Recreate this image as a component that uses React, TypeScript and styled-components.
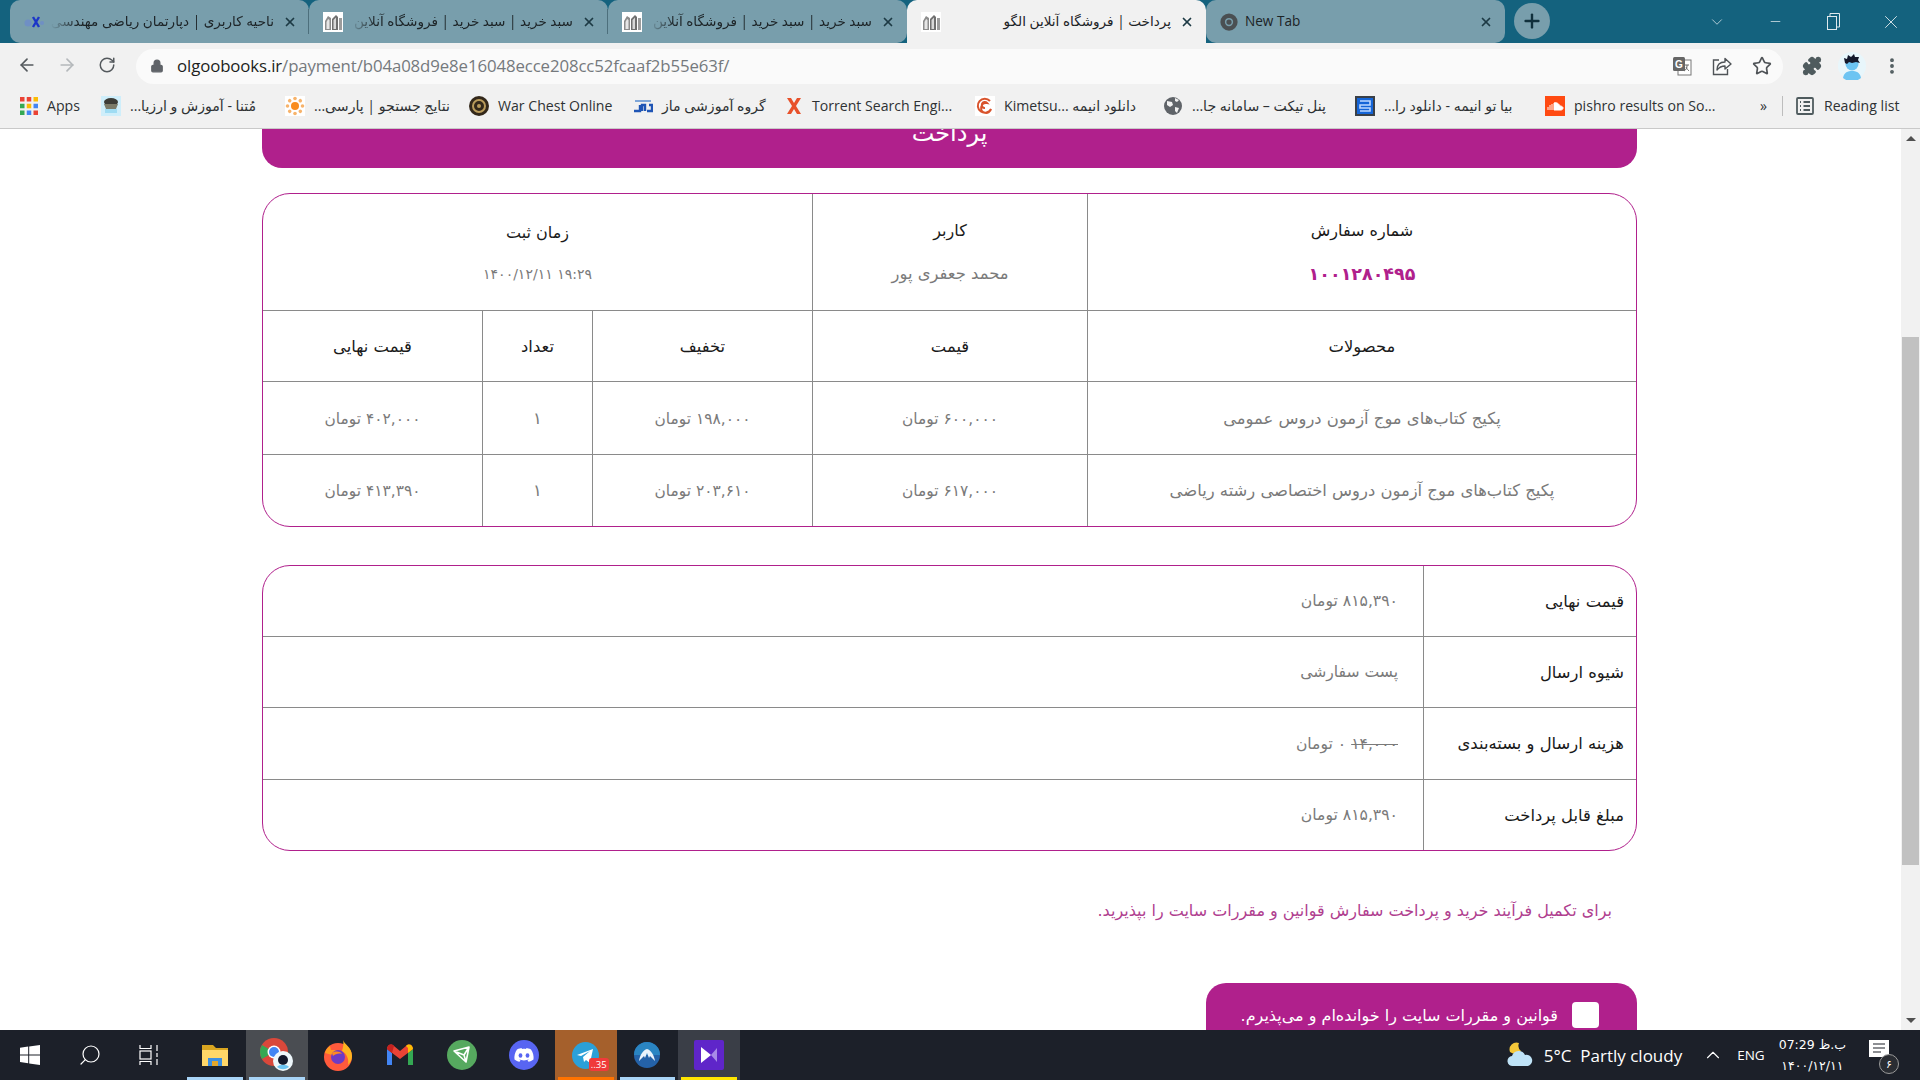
import React from "react";
import styled, { createGlobalStyle } from "styled-components";
import {
  ArrowLeft,
  ArrowRight,
  RotateCw,
  Lock,
  Star,
  MoreVertical,
  ChevronDown,
  ChevronUp,
  Minus,
  X,
  Plus,
  Puzzle,
  Search,
} from "lucide-react";

const Global = createGlobalStyle`
  html, body { margin: 0; padding: 0; background: #fff; overflow: hidden; }
  * { box-sizing: border-box; }
  body { font-family: "Open Sans", "DejaVu Sans", sans-serif; }
`;

const MAGENTA = "#b0208c";
const PERSIAN = '"DejaVu Sans", "Noto Sans", sans-serif';

const Shell = styled.div`
  display: flex;
  flex-direction: column;
  width: 1920px;
  height: 1080px;
  overflow: hidden;
`;

/* ---------- tab strip ---------- */

const TabStrip = styled.div`
  display: flex;
  align-items: stretch;
  flex: 0 0 43px;
  padding-left: 10px;
  background: #14627e;
`;

const Tab = styled.div<{ $active?: boolean; $bl?: boolean; $br?: boolean; $divider?: boolean }>`
  position: relative;
  display: flex;
  align-items: center;
  flex: 0 0 299px;
  min-width: 0;
  padding: 0 12px 0 14px;
  background: ${(p) => (p.$active ? "#f1f1f1" : "#789eac")};
  border-radius: 10px 10px ${(p) => (p.$br ? "10px" : "0")} ${(p) => (p.$bl ? "10px" : "0")};
  color: #1c2326;
  ${(p) =>
    p.$divider &&
    `&::after {
      content: "";
      position: absolute;
      right: 0;
      top: 9px;
      bottom: 9px;
      width: 1px;
      background: #4d6f7c;
    }`}
`;

const TabTitle = styled.div<{ $rtl?: boolean; $fade?: boolean }>`
  flex: 1;
  min-width: 0;
  margin: 0 9px 2px 7px;
  overflow: hidden;
  white-space: nowrap;
  font-family: "Open Sans", ${PERSIAN};
  font-size: 13.6px;
  direction: ${(p) => (p.$rtl ? "rtl" : "ltr")};
  ${(p) =>
    p.$fade &&
    `-webkit-mask-image: linear-gradient(to right, transparent 0, #000 26px);
     mask-image: linear-gradient(to right, transparent 0, #000 26px);`}
`;

const TabClose = styled(X)`
  flex: none;
  width: 14px;
  height: 14px;
  color: #1d3a44;
  stroke-width: 3;
`;

const NewTab = styled.div`
  display: flex;
  align-items: center;
  justify-content: center;
  width: 36px;
  height: 36px;
  margin: 3px 0 0 9px;
  border-radius: 50%;
  background: #789eac;
  color: #10303c;
`;

const WindowButtons = styled.div`
  display: flex;
  align-items: center;
  margin-left: auto;
  color: #dfe9ed;
`;

const WindowButton = styled.div<{ $w: number }>`
  display: flex;
  align-items: center;
  justify-content: center;
  width: ${(p) => p.$w}px;
  height: 43px;
`;

/* ---------- toolbar ---------- */

const Toolbar = styled.div`
  display: flex;
  align-items: center;
  flex: 0 0 43px;
  padding-left: 7px;
  background: #f1f1f1;
  color: #5f6368;
`;

const NavButton = styled.div<{ $dim?: boolean }>`
  display: flex;
  justify-content: center;
  width: 40px;
  color: ${(p) => (p.$dim ? "#b4b8bb" : "#54595d")};
`;

const Omnibox = styled.div`
  display: flex;
  align-items: center;
  flex: 0 0 1647px;
  height: 35px;
  margin: 3px 0 0 9px;
  padding: 0 0 0 14px;
  border-radius: 18px;
  background: #fafafa;
`;

const UrlText = styled.div`
  margin: 0 0 2px 13px;
  font-size: 16.8px;
  color: #75797d;
  letter-spacing: -0.1px;
  b {
    font-weight: 400;
    color: #1c1e20;
  }
`;

const OmniIcons = styled.div`
  display: flex;
  align-items: center;
  gap: 20px;
  margin-left: auto;
  padding-right: 11px;
  color: #4f5357;
`;

const ToolIcons = styled.div`
  display: flex;
  align-items: center;
  gap: 16px;
  margin-left: 19px;
  margin-top: 3px;
`;

/* ---------- bookmarks ---------- */

const BookmarkBar = styled.div`
  display: flex;
  align-items: center;
  flex: 0 0 43px;
  padding: 0 0 3px 20px;
  background: #f1f1f1;
  border-bottom: 1px solid #c9c9c9;
`;

const Bookmark = styled.div<{ $w: number }>`
  display: flex;
  align-items: center;
  gap: 9px;
  flex: 0 0 ${(p) => p.$w}px;
  color: #2e3134;
  white-space: nowrap;
`;

const BookmarkLabel = styled.span`
  font-family: "Open Sans", ${PERSIAN};
  font-size: 14.1px;
`;

const Separator = styled.div`
  width: 1px;
  height: 20px;
  margin: 0 12px 0 10px;
  background: #bdbdbd;
`;

/* ---------- page ---------- */

const Viewport = styled.div`
  display: flex;
  flex: 1;
  min-height: 0;
`;

const PageScroll = styled.div`
  flex: 1;
  min-width: 0;
  overflow: hidden;
  background: #fff;
`;

const Page = styled.main`
  display: flex;
  flex-direction: column;
  align-items: stretch;
  width: 1375px;
  margin: -31px 0 0 262px;
  direction: rtl;
  font-family: ${PERSIAN};
`;

const PageHeader = styled.h1`
  display: flex;
  align-items: center;
  justify-content: center;
  height: 70px;
  margin: 0 0 25px;
  border-radius: 0 0 20px 20px;
  background: ${MAGENTA};
  color: #fff;
  font-size: 24px;
  font-weight: 400;
`;

const Table = styled.table`
  width: 1375px;
  border-collapse: separate;
  border-spacing: 0;
  table-layout: fixed;
  border: 1px solid ${MAGENTA};
  border-radius: 28px;
  margin-bottom: 38px;
`;

const Row = styled.tr<{ $h: number }>`
  height: ${(p) => p.$h}px;
`;

const Cell = styled.td<{ $start?: boolean; $heading?: boolean }>`
  padding: 0 12px;
  text-align: ${(p) => (p.$start ? "right" : "center")};
  font-size: 16.4px;
  font-weight: 400;
  color: ${(p) => (p.$heading ? "#1a1a1a" : "#7a7a7a")};
  border-left: 1px solid #8a8a8a;
  border-bottom: 1px solid #8a8a8a;
  &:last-child {
    border-left: none;
  }
  tr:last-child > & {
    border-bottom: none;
  }
`;

const Amount = styled.span`
  font-size: 15.4px;
`;

const SummaryValue = styled(Cell)`
  padding-right: 25px;
  text-align: right;
  font-size: 15.6px;
`;

const OrderCell = styled.div`
  display: flex;
  flex-direction: column;
  align-items: center;
  gap: 24px;
`;

const OrderLabel = styled.span`
  font-size: 16px;
  color: #1a1a1a;
`;

const OrderValue = styled.span<{ $accent?: boolean; $size?: number }>`
  font-size: ${(p) => p.$size || (p.$accent ? 17.5 : 16.4)}px;
  font-weight: ${(p) => (p.$accent ? 700 : 400)};
  color: ${(p) => (p.$accent ? MAGENTA : "#7a7a7a")};
`;

const Notice = styled.p`
  margin: 12px 25px 0 0;
  height: 82px;
  font-size: 16px;
  color: #b0408f;
`;

const AcceptBar = styled.label`
  display: flex;
  align-items: center;
  gap: 14px;
  align-self: flex-start;
  width: 431px;
  height: 72px;
  padding: 0 38px 8px 0;
  border-radius: 20px 20px 0 0;
  background: ${MAGENTA};
  color: #fff;
  font-size: 16px;
  white-space: nowrap;
`;

const AcceptBox = styled.span`
  flex: none;
  width: 27px;
  height: 26px;
  border-radius: 4px;
  background: #fff;
`;

const Scrollbar = styled.div`
  display: flex;
  flex-direction: column;
  justify-content: space-between;
  flex: 0 0 19px;
  position: relative;
  background: #f1f1f1;
`;

const ScrollArrow = styled.div<{ $down?: boolean }>`
  width: 0;
  height: 0;
  margin: 7px auto;
  border-left: 5px solid transparent;
  border-right: 5px solid transparent;
  ${(p) => (p.$down ? "border-top: 5px solid #505050;" : "border-bottom: 5px solid #505050;")}
`;

const ScrollThumb = styled.div`
  position: absolute;
  top: 208px;
  left: 1px;
  right: 1px;
  height: 528px;
  background: #c1c1c1;
`;

/* ---------- taskbar ---------- */

const Taskbar = styled.footer`
  display: flex;
  align-items: stretch;
  flex: 0 0 50px;
  background: #1c2029;
  color: #fff;
`;

const SystemSlot = styled.div`
  display: flex;
  align-items: center;
  justify-content: center;
  width: 60px;
`;

const AppSlots = styled.div`
  display: flex;
  margin-left: 4px;
`;

const AppSlot = styled.div<{ $bg?: string; $line?: string }>`
  position: relative;
  display: flex;
  align-items: center;
  justify-content: center;
  width: 61.8px;
  background: ${(p) => p.$bg || "transparent"};
  ${(p) =>
    p.$line &&
    `&::after {
      content: "";
      position: absolute;
      left: 3px;
      right: 3px;
      bottom: 0;
      height: 3px;
      background: ${p.$line};
    }`}
`;

const Badge = styled.span`
  position: absolute;
  left: 34px;
  top: 28px;
  padding: 0 2px;
  border-radius: 3px;
  background: #f03a3a;
  font-size: 9.5px;
  line-height: 13px;
  color: #fff;
`;

const Tray = styled.div`
  display: flex;
  align-items: center;
  margin-left: auto;
  font-family: "Open Sans", sans-serif;
`;

const WeatherText = styled.span`
  margin-left: 10px;
  font-size: 17px;
  white-space: nowrap;
`;

const EngText = styled.span`
  margin-left: 13px;
  font-size: 13.5px;
`;

const Clock = styled.div`
  display: flex;
  flex-direction: column;
  align-items: center;
  gap: 6px;
  margin-left: 14px;
  font-family: ${PERSIAN};
  font-size: 12.5px;
  line-height: 15px;
  direction: rtl;
`;

const NotifyWrap = styled.div`
  position: relative;
  width: 30px;
  height: 30px;
  margin: 0 21px 0 23px;
`;

const NotifyBadge = styled.span`
  position: absolute;
  left: 10px;
  top: 14px;
  display: flex;
  align-items: center;
  justify-content: center;
  width: 20px;
  height: 20px;
  border: 1px solid #9a9a9a;
  border-radius: 50%;
  background: #2a2d33;
  font-family: ${PERSIAN};
  font-size: 11px;
`;

/* ---------- drawn icons ---------- */

const StoreFavicon = () => (
  <svg width="20" height="20" viewBox="0 0 20 20">
    <rect width="20" height="20" fill="#fff" />
    <path d="M2 18V9l3-5 3 2v12z" fill="#8c8c8c" />
    <path d="M3.500 17V10l1.600-3 1.400 1v9z" fill="#e6e6e6" />
    <path d="M9 18V7l4-4 2 2v13z" fill="#6f6f6f" />
    <path d="M10.500 17V8l2.500-2.500v11.500z" fill="#d8d8d8" />
    <path d="M16 18V6h3v12z" fill="#9c9c9c" />
  </svg>
);

const DeptFavicon = () => (
  <svg width="20" height="16" viewBox="0 0 20 16">
    <circle cx="4" cy="9" r="3.500" fill="#6f8fc4" />
    <path d="M9 3l6 10M15 3 9 13" stroke="#1c36c8" strokeWidth="2.400" />
    <circle cx="18" cy="9" r="2" fill="#6f8fc4" />
  </svg>
);

const ChromeLogo = ({ size = 16 }: { size?: number }) => (
  <svg width={size} height={size} viewBox="0 0 48 48">
    <circle cx="24" cy="24" r="23" fill="#4a4f52" />
    <circle cx="24" cy="24" r="11" fill="#789eac" />
    <circle cx="24" cy="24" r="7" fill="#4a4f52" />
  </svg>
);

const Avatar = ({ size = 28 }: { size?: number }) => (
  <svg width={size} height={size} viewBox="0 0 28 28">
    <circle cx="14" cy="14" r="14" fill="#e8f6fb" />
    <circle cx="14" cy="12" r="6.500" fill="#6cc4f2" />
    <path d="M5 26c1-6 5-7 9-7s8 1 9 7a14 14 0 0 1-18 0z" fill="#6cc4f2" />
    <path d="M7 11 6 6l3 1 1-4 3 2 3-3 1 3 4 0-1 3 2 3-4-1-4 1-3-1-2 2z" fill="#14182b" />
  </svg>
);

const TranslateIcon = () => (
  <svg width="20" height="20" viewBox="0 0 20 20">
    <rect x="6" y="4" width="13" height="15" fill="#fff" stroke="#777" />
    <rect x="1" y="1" width="12" height="14" rx="1.500" fill="#666" />
    <text x="7" y="12" textAnchor="middle" fontSize="10" fontWeight="700" fill="#fff" fontFamily="Liberation Sans">
      G
    </text>
    <path d="M13 9h4M15 9v1c0 2-1 4-3 5M14 11c1 2 2 3 3 4" fill="none" stroke="#666" />
  </svg>
);

const ShareIcon = () => (
  <svg width="20" height="20" viewBox="0 0 20 20" fill="none" stroke="currentColor" strokeWidth="1.400">
    <path d="M7 4H1.500v14.500h14V13" />
    <path d="M5 14c0-5 3-8 8-8V2.500l6 5.500-6 5V10c-4 0-6 1.500-8 4z" strokeLinejoin="round" />
  </svg>
);

const AppsIcon = () => (
  <svg width="18" height="18" viewBox="0 0 16 16">
    {[0, 1, 2].map((r) =>
      [0, 1, 2].map((c) => (
        <rect
          key={`${r}-${c}`}
          x={c * 6}
          y={r * 6}
          width="4"
          height="4"
          fill={[["#ea4335", "#ea4335", "#fbbc05"], ["#34a853", "#fbbc05", "#4285f4"], ["#34a853", "#4285f4", "#ea4335"]][r][c]}
        />
      ))
    )}
  </svg>
);

const MotanaIcon = () => (
  <svg width="20" height="20" viewBox="0 0 20 20">
    <rect width="20" height="20" fill="#cfeefa" />
    <ellipse cx="10" cy="6" rx="7" ry="4" fill="#3c3c36" />
    <path d="M3 8h14l-2 5H5z" fill="#7a7a68" />
    <path d="M4 13h12v4H4z" fill="#9fdcf3" />
  </svg>
);

const ParsiIcon = () => (
  <svg width="20" height="20" viewBox="0 0 20 20">
    <rect width="20" height="20" fill="#fff" />
    <circle cx="10" cy="10" r="4" fill="#f98c1f" />
    {[0, 45, 90, 135, 180, 225, 270, 315].map((a) => (
      <circle key={a} cx="10" cy="2.500" r="1.800" fill="#f7b36b" transform={`rotate(${a} 10 10)`} />
    ))}
  </svg>
);

const WarChestIcon = () => (
  <svg width="20" height="20" viewBox="0 0 20 20">
    <circle cx="10" cy="10" r="10" fill="#33281a" />
    <circle cx="10" cy="10" r="6" fill="none" stroke="#b99b5b" strokeWidth="2" />
    <circle cx="10" cy="10" r="2" fill="#b99b5b" />
  </svg>
);

const MazIcon = () => (
  <svg width="20" height="20" viewBox="0 0 20 20">
    <path d="M2 5h16" stroke="#7fa6d8" strokeWidth="2" />
    <path d="M1 15h6V9M9 15V9h3v6M14 15h5V9h-3" fill="none" stroke="#1f55b5" strokeWidth="2.400" />
  </svg>
);

const TorrentIcon = () => (
  <svg width="18" height="18" viewBox="0 0 18 18">
    <path d="M2 1h4l3 5 3-5h4l-5 8 5 8h-4l-3-5-3 5H2l5-8z" fill="#e8512a" />
  </svg>
);

const KimetsuIcon = () => (
  <svg width="20" height="20" viewBox="0 0 20 20">
    <rect width="20" height="20" fill="#fff" />
    <path d="M15 5a7 7 0 1 0 1 8 5 5 0 1 1-4-6 3 3 0 1 0-2 5" fill="none" stroke="#d9532c" strokeWidth="2" />
  </svg>
);

const GlobeIcon = () => (
  <svg width="20" height="20" viewBox="0 0 20 20">
    <circle cx="10" cy="10" r="9" fill="#5f6368" />
    <path d="M4 5l5 1 1 3-3 2-3-2zM12 11l4 1-2 5-2-2zM12 2l4 2-2 2-2-1z" fill="#f1f1f1" />
  </svg>
);

const AnaIcon = () => (
  <svg width="20" height="20" viewBox="0 0 20 20">
    <rect width="20" height="20" fill="#3a4048" />
    <rect x="2" y="2" width="16" height="16" fill="#1565d8" />
    <path d="M5 5h10v4H5v3h10v3H5" fill="none" stroke="#bcd7ff" strokeWidth="1.600" />
  </svg>
);

const SoundcloudIcon = () => (
  <svg width="20" height="20" viewBox="0 0 20 20">
    <rect width="20" height="20" fill="#ff4a12" />
    <path d="M3 14v-3M5 14V9M7 14V8M9 14V7c3-1 5 1 6 3 2 0 3 1 3 2s-1 2-2 2z" stroke="#fff" fill="#fff" strokeWidth="1" />
  </svg>
);

const ReadingListIcon = () => (
  <svg width="20" height="20" viewBox="0 0 20 20" fill="none" stroke="#4f5b5e" strokeWidth="1.800">
    <rect x="2" y="2" width="16" height="16" rx="1" />
    <path d="M5 6h1M8.500 6H15M5 10h1M8.500 10H15M5 14h1M8.500 14H15" />
  </svg>
);

const WindowsLogo = () => (
  <svg width="20" height="20" viewBox="0 0 20 20" fill="#fff">
    <path d="M0 2.800 8.200 1.600v7.800H0zM9.200 1.500 20 0v9.400H9.200zM0 10.400h8.200v7.900L0 17.100zM9.200 10.400H20V20L9.200 18.500z" />
  </svg>
);

const TaskViewIcon = () => (
  <svg width="22" height="20" viewBox="0 0 22 20" fill="none" stroke="#fff" strokeWidth="1.200">
    <path d="M1 0v3.500h11V0M1 20v-3.500h11V20" />
    <rect x="1" y="6" width="11" height="8" />
    <path d="M18 0v6M18 8v4M18 14v6" />
  </svg>
);

const ExplorerIcon = () => (
  <svg width="28" height="24" viewBox="0 0 28 24">
    <path d="M1 2h11l3 3h12v18H1z" fill="#d9a520" />
    <path d="M1 7h26v16H1z" fill="#ffd768" />
    <path d="M7 23v-8h14v8h-4v-5h-6v5z" fill="#3d8fe0" />
    <path d="M11 18h6v5h-6z" fill="#e4a72b" />
  </svg>
);

const ChromeWithAvatar = () => (
  <svg width="36" height="36" viewBox="0 0 36 36">
    <circle cx="15" cy="15" r="14" fill="#d9483b" />
    <path d="M15 15 3 22a14 14 0 0 1 0-14z" fill="#34a853" />
    <path d="M15 15h14a14 14 0 0 1-14 14z" fill="#f4c20d" />
    <circle cx="15" cy="15" r="6.500" fill="#fff" />
    <circle cx="15" cy="15" r="5" fill="#4285f4" />
    <circle cx="24" cy="24" r="10" fill="#eef7fb" />
    <circle cx="24" cy="23" r="5" fill="#14182b" />
    <path d="M18 30c2-3 10-3 12 0a10 10 0 0 1-12 0z" fill="#6cc4f2" />
  </svg>
);

const FirefoxIcon = () => (
  <svg width="30" height="32" viewBox="0 0 30 32">
    <circle cx="15" cy="18" r="14" fill="#ff5a3c" />
    <path d="M20 1c1 4 9 7 9 16 0 4-2 7-4 9 1-6-1-11-6-14 1-4 2-7 1-11z" fill="#ffb51f" />
    <path d="M2 14c1-4 3-6 5-7l1 4 5 0 2 3-6 2z" fill="#ff9a1f" />
    <circle cx="15" cy="18" r="7" fill="#6e3bc4" />
    <path d="M9 14c3-2 8-2 10 1-3-1-7 0-9 2z" fill="#ff8a1f" />
  </svg>
);

const GmailIcon = () => (
  <svg width="28" height="24" viewBox="0 0 28 24">
    <path d="M1 6v16h5V10z" fill="#4285f4" />
    <path d="M22 10v12h5V6z" fill="#34a853" />
    <path d="M1 6c0-4 4-6 7-3l6 5 6-5c3-3 7-1 7 3l-13 10z" fill="#ea4335" />
    <path d="M20 3c3-3 7-1 7 3l-5 4V5z" fill="#fbbc05" />
    <path d="M1 6c0-4 4-6 7-3l-2 7z" fill="#c5221f" />
  </svg>
);

const GreenIcon = () => (
  <svg width="30" height="30" viewBox="0 0 30 30">
    <circle cx="15" cy="15" r="15" fill="#56a95f" />
    <path d="M7 11 22 7l-3 15z M7 11l10 4 2 7M22 7l-5 8" fill="none" stroke="#fff" strokeWidth="1.600" strokeLinejoin="round" />
  </svg>
);

const DiscordIcon = () => (
  <svg width="30" height="30" viewBox="0 0 30 30">
    <circle cx="15" cy="15" r="15" fill="#5865f2" />
    <path d="M8 9.500c2-1 3.500-1.400 4.500-1.500l.5 1c1.300-.2 2.700-.2 4 0l.5-1c1 .1 2.500.5 4.500 1.500 2 3 3 6.500 2.500 10-1.500 1.200-3.300 2-5 2.300l-1-1.600 1.800-.9c-3.500 1.500-7.100 1.500-10.600 0l1.800.9-1 1.600c-1.700-.3-3.500-1.100-5-2.300-.5-3.500.5-7 2.500-10z" fill="#fff" />
    <ellipse cx="11.500" cy="15.500" rx="1.900" ry="2.200" fill="#5865f2" />
    <ellipse cx="18.500" cy="15.500" rx="1.900" ry="2.200" fill="#5865f2" />
  </svg>
);

const TelegramIcon = () => (
  <svg width="27" height="27" viewBox="0 0 27 27">
    <circle cx="13.500" cy="13.500" r="13.500" fill="#2ba0d8" />
    <path d="M5 13 21 7l-3 14-4-3-2 2-1-5 7-6-9 5z" fill="#fff" />
  </svg>
);

const NordIcon = () => (
  <svg width="26" height="26" viewBox="0 0 26 26">
    <circle cx="13" cy="13" r="13" fill="#2462a8" />
    <path d="M13 0a13 13 0 0 1 13 13H0A13 13 0 0 1 13 0z" fill="#2a85c2" />
    <path d="M5 19c1-6 4-11 8-12 4 1 7 6 8 12l-5-5-1 2-2-5-2 5-1-2z" fill="#eaf3fb" />
  </svg>
);

const VsIcon = () => (
  <svg width="30" height="30" viewBox="0 0 30 30">
    <rect width="30" height="30" rx="2" fill="#5f25c9" />
    <path d="M7 7v16l10-8z" fill="#fff" />
    <path d="M17 15l6-7v14z" fill="#a88be8" />
  </svg>
);

const WeatherIcon = () => (
  <svg width="28" height="26" viewBox="0 0 28 26">
    <path d="M13 1a7 7 0 0 0-9 9 8 8 0 0 0 11-1 7 7 0 0 1-2-8z" fill="#f5c83a" />
    <path d="M7 24a5 5 0 0 1-1-10 7 7 0 0 1 13-1 5.500 5.500 0 0 1 3 11z" fill="#bfe3f7" />
  </svg>
);

const NotifyIcon = () => (
  <svg width="20" height="18" viewBox="0 0 20 18">
    <path d="M0 0h20v17H0z" fill="#fff" />
    <path d="M4 4h12M4 8h12M4 12h8" stroke="#1c2029" strokeWidth="1.200" />
  </svg>
);

const App = () => {
  return (
    <Shell>
      <Global />
      <TabStrip>
        <Tab $bl $divider>
          <DeptFavicon />
          <TabTitle $rtl $fade>
            ناحیه کاربری | دپارتمان ریاضی مهندسی و علوم
          </TabTitle>
          <TabClose />
        </Tab>
        <Tab $divider>
          <StoreFavicon />
          <TabTitle $rtl $fade>
            سبد خرید | سبد خرید | فروشگاه آنلاین الگو
          </TabTitle>
          <TabClose />
        </Tab>
        <Tab $br>
          <StoreFavicon />
          <TabTitle $rtl $fade>
            سبد خرید | سبد خرید | فروشگاه آنلاین الگو
          </TabTitle>
          <TabClose />
        </Tab>
        <Tab $active>
          <StoreFavicon />
          <TabTitle $rtl>پرداخت | فروشگاه آنلاین الگو</TabTitle>
          <TabClose />
        </Tab>
        <Tab $bl $br>
          <ChromeLogo size={18} />
          <TabTitle>New Tab</TabTitle>
          <TabClose />
        </Tab>
        <NewTab>
          <Plus size={22} strokeWidth={2.6} />
        </NewTab>
        <WindowButtons>
          <WindowButton $w={58}>
            <ChevronDown size={18} strokeWidth={1} />
          </WindowButton>
          <WindowButton $w={58}>
            <Minus size={15} strokeWidth={1.2} />
          </WindowButton>
          <WindowButton $w={58}>
            <svg width="13" height="17" viewBox="0 0 13 17" fill="none" stroke="currentColor">
              <rect x="0.500" y="3.500" width="9" height="13" />
              <path d="M3 3V0.500h9.500V14H10" />
            </svg>
          </WindowButton>
          <WindowButton $w={58}>
            <X size={22} strokeWidth={1} />
          </WindowButton>
        </WindowButtons>
      </TabStrip>

      <Toolbar>
        <NavButton>
          <ArrowLeft size={20} />
        </NavButton>
        <NavButton $dim>
          <ArrowRight size={20} />
        </NavButton>
        <NavButton>
          <RotateCw size={18} />
        </NavButton>
        <Omnibox>
          <Lock size={14} fill="#5f6368" />
          <UrlText>
            <b>olgoobooks.ir</b>/payment/b04a08d9e8e16048ecce208cc52fcaaf2b55e63f/
          </UrlText>
          <OmniIcons>
            <TranslateIcon />
            <ShareIcon />
            <Star size={20} strokeWidth={2} />
          </OmniIcons>
        </Omnibox>
        <ToolIcons>
          <Puzzle size={20} fill="#4f5b5e" color="#4f5b5e" />
          <Avatar />
          <MoreVertical size={20} color="#4f5b5e" strokeWidth={2.6} />
        </ToolIcons>
      </Toolbar>

      <BookmarkBar>
        <Bookmark $w={81}>
          <AppsIcon />
          <BookmarkLabel>Apps</BookmarkLabel>
        </Bookmark>
        <Bookmark $w={184}>
          <MotanaIcon />
          <BookmarkLabel dir="rtl">مُتنا - آموزش و ارزیا...</BookmarkLabel>
        </Bookmark>
        <Bookmark $w={184}>
          <ParsiIcon />
          <BookmarkLabel dir="rtl">نتایج جستجو | پارسی...</BookmarkLabel>
        </Bookmark>
        <Bookmark $w={164}>
          <WarChestIcon />
          <BookmarkLabel>War Chest Online</BookmarkLabel>
        </Bookmark>
        <Bookmark $w={152}>
          <MazIcon />
          <BookmarkLabel dir="rtl">گروه آموزشی ماز</BookmarkLabel>
        </Bookmark>
        <Bookmark $w={190}>
          <TorrentIcon />
          <BookmarkLabel>Torrent Search Engi...</BookmarkLabel>
        </Bookmark>
        <Bookmark $w={188}>
          <KimetsuIcon />
          <BookmarkLabel>Kimetsu... دانلود انیمه</BookmarkLabel>
        </Bookmark>
        <Bookmark $w={192}>
          <GlobeIcon />
          <BookmarkLabel dir="rtl">پنل تیکت – سامانه جا...</BookmarkLabel>
        </Bookmark>
        <Bookmark $w={190}>
          <AnaIcon />
          <BookmarkLabel dir="rtl">بیا تو انیمه - دانلود را...</BookmarkLabel>
        </Bookmark>
        <Bookmark $w={215}>
          <SoundcloudIcon />
          <BookmarkLabel>pishro results on So...</BookmarkLabel>
        </Bookmark>
        <Bookmark $w={12}>
          <BookmarkLabel>»</BookmarkLabel>
        </Bookmark>
        <Separator />
        <Bookmark $w={106}>
          <ReadingListIcon />
          <BookmarkLabel>Reading list</BookmarkLabel>
        </Bookmark>
      </BookmarkBar>

      <Viewport>
        <PageScroll>
          <Page>
            <PageHeader>پرداخت</PageHeader>

            <Table>
              <colgroup>
                <col width="549" />
                <col width="275" />
                <col width="220" />
                <col width="110" />
                <col width="219" />
              </colgroup>
              <tbody>
                <Row $h={117}>
                  <Cell>
                    <OrderCell>
                      <OrderLabel>شماره سفارش</OrderLabel>
                      <OrderValue $accent>۱۰۰۱۲۸۰۴۹۵</OrderValue>
                    </OrderCell>
                  </Cell>
                  <Cell>
                    <OrderCell>
                      <OrderLabel>کاربر</OrderLabel>
                      <OrderValue>محمد جعفری پور</OrderValue>
                    </OrderCell>
                  </Cell>
                  <Cell colSpan={3}>
                    <OrderCell>
                      <OrderLabel>زمان ثبت</OrderLabel>
                      <OrderValue $size={14}>۱۹:۲۹ ۱۴۰۰/۱۲/۱۱</OrderValue>
                    </OrderCell>
                  </Cell>
                </Row>
                <Row $h={71}>
                  <Cell $heading>محصولات</Cell>
                  <Cell $heading>قیمت</Cell>
                  <Cell $heading>تخفیف</Cell>
                  <Cell $heading>تعداد</Cell>
                  <Cell $heading>قیمت نهایی</Cell>
                </Row>
                <Row $h={73}>
                  <Cell>پکیج کتاب‌های موج آزمون دروس عمومی</Cell>
                  <Cell><Amount>۶۰۰,۰۰۰ تومان</Amount></Cell>
                  <Cell><Amount>۱۹۸,۰۰۰ تومان</Amount></Cell>
                  <Cell>۱</Cell>
                  <Cell><Amount>۴۰۲,۰۰۰ تومان</Amount></Cell>
                </Row>
                <Row $h={71}>
                  <Cell>پکیج کتاب‌های موج آزمون دروس اختصاصی رشته ریاضی</Cell>
                  <Cell><Amount>۶۱۷,۰۰۰ تومان</Amount></Cell>
                  <Cell><Amount>۲۰۳,۶۱۰ تومان</Amount></Cell>
                  <Cell>۱</Cell>
                  <Cell><Amount>۴۱۳,۳۹۰ تومان</Amount></Cell>
                </Row>
              </tbody>
            </Table>

            <Table>
              <colgroup>
                <col width="213" />
                <col />
              </colgroup>
              <tbody>
                <Row $h={71}>
                  <Cell $heading $start>قیمت نهایی</Cell>
                  <SummaryValue>۸۱۵,۳۹۰ تومان</SummaryValue>
                </Row>
                <Row $h={71}>
                  <Cell $heading $start>شیوه ارسال</Cell>
                  <SummaryValue>پست سفارشی</SummaryValue>
                </Row>
                <Row $h={72}>
                  <Cell $heading $start>هزینه ارسال و بسته‌بندی</Cell>
                  <SummaryValue>
                    <del>۱۴,۰۰۰</del> ۰ تومان
                  </SummaryValue>
                </Row>
                <Row $h={70}>
                  <Cell $heading $start>مبلغ قابل پرداخت</Cell>
                  <SummaryValue>۸۱۵,۳۹۰ تومان</SummaryValue>
                </Row>
              </tbody>
            </Table>

            <Notice>برای تکمیل فرآیند خرید و پرداخت سفارش قوانین و مقررات سایت را بپذیرید.</Notice>

            <AcceptBar>
              <AcceptBox />
              قوانین و مقررات سایت را خوانده‌ام و می‌پذیرم.
            </AcceptBar>
          </Page>
        </PageScroll>
        <Scrollbar>
          <ScrollArrow />
          <ScrollThumb />
          <ScrollArrow $down />
        </Scrollbar>
      </Viewport>

      <Taskbar>
        <SystemSlot>
          <WindowsLogo />
        </SystemSlot>
        <SystemSlot>
          <Search size={24} strokeWidth={1.2} style={{ transform: "scaleX(-1)" }} />
        </SystemSlot>
        <SystemSlot>
          <TaskViewIcon />
        </SystemSlot>
        <AppSlots>
          <AppSlot $line="#a8d4f7">
            <ExplorerIcon />
          </AppSlot>
          <AppSlot $bg="#4a4d52" $line="#a8d4f7">
            <ChromeWithAvatar />
          </AppSlot>
          <AppSlot>
            <FirefoxIcon />
          </AppSlot>
          <AppSlot>
            <GmailIcon />
          </AppSlot>
          <AppSlot>
            <GreenIcon />
          </AppSlot>
          <AppSlot>
            <DiscordIcon />
          </AppSlot>
          <AppSlot $bg="#a5602c" $line="#ff7300">
            <TelegramIcon />
            <Badge>..35</Badge>
          </AppSlot>
          <AppSlot $line="#a8d4f7">
            <NordIcon />
          </AppSlot>
          <AppSlot $bg="#3a3e47" $line="#ffe600">
            <VsIcon />
          </AppSlot>
        </AppSlots>
        <Tray>
          <WeatherIcon />
          <WeatherText>5°C&nbsp;&nbsp;Partly cloudy</WeatherText>
          <ChevronUp size={22} strokeWidth={1.2} style={{ marginLeft: 20 }} />
          <EngText>ENG</EngText>
          <Clock>
            <span>ب.ظ 07:29</span>
            <span>۱۴۰۰/۱۲/۱۱</span>
          </Clock>
          <NotifyWrap>
            <NotifyIcon />
            <NotifyBadge>۶</NotifyBadge>
          </NotifyWrap>
        </Tray>
      </Taskbar>
    </Shell>
  );
};

export default App;
